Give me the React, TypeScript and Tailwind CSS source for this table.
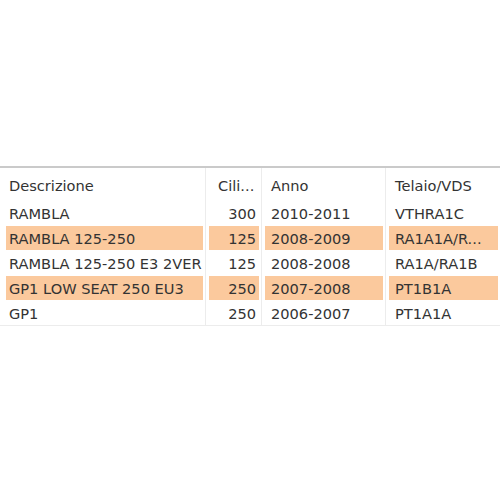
import React from 'react';

type Row = { descr: string; cil: string; anno: string; telaio: string; hl?: boolean };

const rows: Row[] = [
  { descr: 'RAMBLA', cil: '300', anno: '2010-2011', telaio: 'VTHRA1C' },
  { descr: 'RAMBLA 125-250', cil: '125', anno: '2008-2009', telaio: 'RA1A1A/R...', hl: true },
  { descr: 'RAMBLA 125-250 E3 2VER', cil: '125', anno: '2008-2008', telaio: 'RA1A/RA1B' },
  { descr: 'GP1 LOW SEAT 250 EU3', cil: '250', anno: '2007-2008', telaio: 'PT1B1A', hl: true },
  { descr: 'GP1', cil: '250', anno: '2006-2007', telaio: 'PT1A1A' },
];

const Cell = ({ children, hl, right, first, last }: { children: React.ReactNode; hl?: boolean; right?: boolean; first?: boolean; last?: boolean }) => (
  <div className={`h-[25px] py-[0.5px] ${first ? 'pl-[6px] pr-[2px]' : 'pl-[3px] pr-[2px]'} ${last ? '' : 'border-r border-[#ececec]'}`}>
    <div
      className={`h-full flex items-center pt-[2px] ${right ? 'justify-end pr-[3px]' : first ? 'pl-[3px]' : 'pl-[6px]'} ${hl ? 'bg-[#fbc99d]' : ''}`}
    >
      {children}
    </div>
  </div>
);

const App = () => {
  return (
    <div className="w-[500px] h-[500px] bg-white pt-[166px] text-[#333] text-[14.6px]" style={{ fontFamily: '"DejaVu Sans", Verdana, sans-serif' }}>
      <div className="border-t-2 border-[#cacaca]">
        <div className="grid grid-cols-[206px_56px_124px_1fr]">
          {['Descrizione', 'Cili...', 'Anno', 'Telaio/VDS'].map((h, i) => (
            <div
              key={h}
              className={`h-[32px] flex items-center pt-[3px] ${i === 1 ? 'pl-[12px]' : 'pl-[9px]'} ${i < 3 ? 'border-r border-[#ececec]' : ''}`}
            >
              {h}
            </div>
          ))}
          {rows.map((r) => (
            <React.Fragment key={r.descr}>
              <Cell hl={r.hl} first>{r.descr}</Cell>
              <Cell hl={r.hl} right>{r.cil}</Cell>
              <Cell hl={r.hl}>{r.anno}</Cell>
              <Cell hl={r.hl} last>{r.telaio}</Cell>
            </React.Fragment>
          ))}
        </div>
        <div className="border-t border-[#ececec]" />
      </div>
    </div>
  );
};

export default App;
